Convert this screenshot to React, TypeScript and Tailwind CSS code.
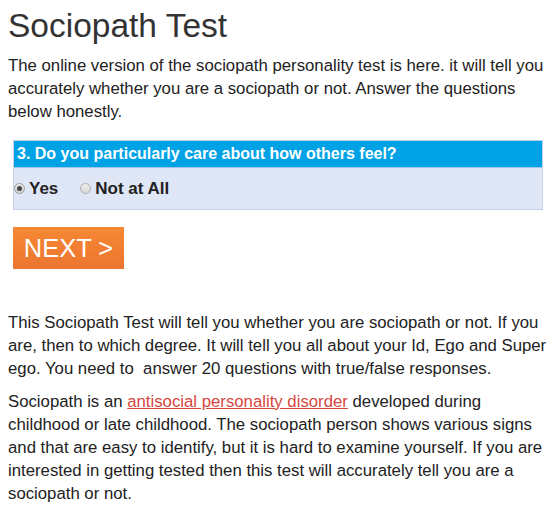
import React from "react";

export default function App() {
  return (
    <div className="w-[550px] h-[512px] overflow-hidden bg-white text-[#222] font-['Liberation_Sans',Arial,sans-serif]">
      <div className="pl-2 pr-[1px]">
        <h1 className="text-[33.5px] leading-[40px] text-[#333] pt-[6px]">Sociopath Test</h1>
        <p className="text-[16.75px] leading-[23px] mt-[8px]">
          The online version of the sociopath personality test is here. it will tell you accurately whether you are a sociopath or not. Answer the questions below honestly.
        </p>
        <div className="ml-[5px] w-[530px] mt-[17px] border border-[#c3d0e8] bg-[#dfe6f5]">
          <div className="bg-[#00a2e6] text-white font-bold text-[16px] leading-[26px] px-[3px] border-b border-[#9ec5ea]">
            3. Do you particularly care about how others feel?
          </div>
          <div className="h-[41px] flex items-start pt-[8px] gap-[22px] text-[17px] font-bold text-[#222]">
            <label className="flex items-center gap-[4px]">
              <span className="w-[11px] h-[11px] rounded-full border border-[#a0a0a0] bg-gradient-to-b from-[#e8e8e8] to-[#cfcfcf] flex items-center justify-center">
                <span className="w-[5px] h-[5px] rounded-full bg-[#444]" />
              </span>
              Yes
            </label>
            <label className="flex items-center gap-[4px]">
              <span className="w-[11px] h-[11px] rounded-full border border-[#b0b0b0] bg-gradient-to-b from-[#f0f0f0] to-[#d6d6d6]" />
              Not at All
            </label>
          </div>
        </div>
        <div className="ml-[5px] mt-[17px] w-[111px] h-[42px] bg-gradient-to-b from-[#f68834] to-[#ec7530] text-white text-[25.5px] flex items-center justify-center">
          NEXT &gt;
        </div>
        <p className="text-[16.75px] leading-[23px] mt-[42px]">
          This Sociopath Test will tell you whether you are sociopath or not. If you are, then to which degree. It will tell you all about your Id, Ego and Super ego. You need to&nbsp; answer 20 questions with true/false responses.
        </p>
        <p className="text-[16.75px] leading-[23px] mt-[10px]">
          Sociopath is an{" "}
          <a className="text-[#d6473f] underline">antisocial personality disorder</a> developed during childhood or late childhood. The sociopath person shows various signs and that are easy to identify, but it is hard to examine yourself. If you are interested in getting tested then this test will accurately tell you are a sociopath or not.
        </p>
      </div>
    </div>
  );
}
